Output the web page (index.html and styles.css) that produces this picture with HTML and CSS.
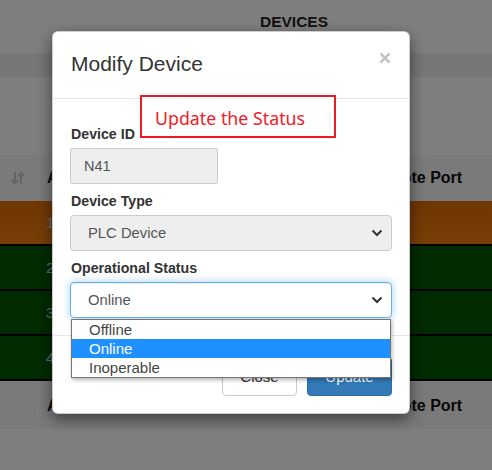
FILE: index.html
```html
<!DOCTYPE html>
<html>
<head>
<meta charset="utf-8">
<link rel="stylesheet" href="styles.css">
</head>
<body>
<div class="page">
  <header class="topbar"><h1 class="page-title">DEVICES</h1></header>
  <div class="subbar"></div>
  <div class="spacer"></div>
  <div class="grid">
    <div class="row head">
      <div class="cell sort">
        <svg width="14" height="14" viewBox="0 0 14 14"><path d="M4 1v11M1 9l3 3 3-3M10 13V2M7 5l3-3 3 3" fill="none" stroke="#c8c8c8" stroke-width="2"/></svg>
      </div>
      <div class="cell">A</div>
      <div class="cell"></div>
      <div class="cell right">Remote Port</div>
    </div>
    <div class="row data orange">
      <div class="cell"></div><div class="cell num">1</div><div class="cell"></div><div class="cell"></div>
    </div>
    <div class="row data green">
      <div class="cell"></div><div class="cell num">2</div><div class="cell"></div><div class="cell"></div>
    </div>
    <div class="row data green">
      <div class="cell"></div><div class="cell num">3</div><div class="cell"></div><div class="cell"></div>
    </div>
    <div class="row data green">
      <div class="cell"></div><div class="cell num">4</div><div class="cell"></div><div class="cell"></div>
    </div>
    <div class="row head foot">
      <div class="cell sort"></div>
      <div class="cell">A</div>
      <div class="cell"></div>
      <div class="cell right">Remote Port</div>
    </div>
  </div>
</div>
<div class="backdrop"></div>
<div class="modal">
  <div class="modal-header">
    <h4 class="modal-title">Modify Device</h4>
    <svg class="close" width="12" height="12" viewBox="0 0 12 12"><path d="M1.5 1.5l9 9M10.5 1.5l-9 9" stroke="#c4c4c4" stroke-width="2.6" fill="none"/></svg>
  </div>
  <div class="modal-body">
    <div class="form-group">
      <label class="label">Device ID</label>
      <div class="input short">N41</div>
    </div>
    <div class="form-group">
      <label class="label">Device Type</label>
      <div class="select disabled"><span>PLC Device</span>
        <svg width="12" height="8" viewBox="0 0 12 8"><path d="M1.5 1.5l4.5 4.5 4.5-4.5" fill="none" stroke="#333" stroke-width="2"/></svg>
      </div>
    </div>
    <div class="form-group">
      <label class="label">Operational Status</label>
      <div class="select focus"><span>Online</span>
        <svg width="12" height="8" viewBox="0 0 12 8"><path d="M1.5 1.5l4.5 4.5 4.5-4.5" fill="none" stroke="#333" stroke-width="2"/></svg>
      </div>
    </div>
  </div>
  <div class="modal-footer">
    <div class="btn btn-default">Close</div>
    <div class="btn btn-primary">Update</div>
  </div>
  <div class="annotation">Update the Status</div>
  <ul class="options">
    <li class="option">Offline</li>
    <li class="option selected">Online</li>
    <li class="option">Inoperable</li>
  </ul>
</div>
</body>
</html>
```
FILE: styles.css
```css
html, body {
  margin: 0;
  padding: 0;
}
body {
  width: 492px;
  height: 470px;
  overflow: hidden;
  position: relative;
  font-family: "Liberation Sans", Arial, sans-serif;
  color: #333;
}
.page {
  display: flex;
  flex-direction: column;
  height: 470px;
  background: #fff;
}
.topbar {
  height: 53px;
  box-sizing: border-box;
  padding: 13px 0 0 96px;
  display: flex;
  justify-content: center;
  align-items: flex-start;
}
.page-title {
  margin: 0;
  font-size: 15.5px;
  line-height: 18px;
  font-weight: 700;
  color: #222;
}
.subbar {
  height: 24px;
  background: #eeeeee;
}
.spacer {
  height: 77px;
}
.grid {
  display: flex;
  flex-direction: column;
}
.row {
  display: grid;
  grid-template-columns: 37px 156px 140px 1fr;
}
.row.head {
  height: 46px;
  background: #f4f4f4;
  border-top: 1px solid #fff;
  font-weight: 700;
  font-size: 16px;
  color: #111;
}
.row.head .cell {
  display: flex;
  align-items: center;
  border-left: 1px solid #ffffff;
  padding-left: 9px;
}
.row.head .cell.sort {
  border-left: none;
  padding-left: 11px;
}
.row.head .cell.right {
  padding-left: 33px;
}
.row.foot {
  height: 47px;
  border-bottom: 2px solid #fff;
}
.row.data {
  height: 43px;
  border-bottom: 2px solid #000;
}
.row.data .cell.num {
  display: flex;
  align-items: center;
  padding-left: 9px;
  color: #c8d8ea;
  font-size: 15px;
}
.orange {
  background: linear-gradient(#e06c08, #f07e0c);
}
.green {
  background: #025602;
}
.backdrop {
  position: absolute;
  inset: 0;
  background: rgba(0, 0, 0, 0.5);
}
.modal {
  position: absolute;
  left: 52px;
  top: 31px;
  width: 358px;
  height: 383px;
  box-sizing: border-box;
  background: #fff;
  border: 1px solid rgba(0, 0, 0, 0.2);
  border-radius: 6px;
  box-shadow: 0 5px 15px rgba(0, 0, 0, 0.5);
  display: flex;
  flex-direction: column;
}
.modal-header {
  height: 67px;
  box-sizing: border-box;
  border-bottom: 1px solid #e5e5e5;
  padding: 19px 18px 0 18px;
  display: flex;
  justify-content: space-between;
  align-items: flex-start;
}
.modal-title {
  margin: 0;
  font-size: 21px;
  line-height: 26px;
  font-weight: 400;
  color: #333;
}
.close {
  margin-top: 1px;
}
.modal-body {
  padding: 25px 17px 17px 17px;
  display: flex;
  flex-direction: column;
  gap: 7px;
}
.label {
  display: block;
  font-size: 14.2px;
  line-height: 20px;
  font-weight: 700;
  color: #333;
  margin: 0 0 4px 1px;
}
.input {
  height: 36px;
  box-sizing: border-box;
  border: 1px solid #ccc;
  border-radius: 2px;
  background: #eeeeee;
  padding-left: 13px;
  display: flex;
  align-items: center;
  font-size: 14.5px;
  color: #555;
}
.input.short {
  width: 148px;
}
.select {
  height: 36px;
  box-sizing: border-box;
  border: 1px solid #ccc;
  border-radius: 4px;
  padding: 0 8px 0 17px;
  display: flex;
  align-items: center;
  justify-content: space-between;
  font-size: 14.8px;
  color: #555;
}
.select.disabled {
  background: #eeeeee;
}
.select.focus {
  background: #fff;
  border-color: #66afe9;
  box-shadow: inset 0 1px 1px rgba(0, 0, 0, 0.075), 0 0 8px rgba(102, 175, 233, 0.6);
}
.modal-footer {
  border-top: 1px solid #e5e5e5;
  padding: 21px 17px 0 17px;
  display: flex;
  justify-content: flex-end;
  gap: 10px;
}
.btn {
  height: 39px;
  box-sizing: border-box;
  border-radius: 4px;
  display: flex;
  align-items: center;
  justify-content: center;
  font-size: 15px;
}
.btn-default {
  width: 75px;
  border: 1px solid #ccc;
  background: #fff;
  color: #333;
}
.btn-primary {
  width: 85px;
  border: 1px solid #2e6da4;
  background: #337ab7;
  color: #fff;
}
.annotation {
  position: absolute;
  left: 87px;
  top: 63px;
  width: 196px;
  height: 43px;
  box-sizing: border-box;
  border: 2px solid #ed1c24;
  padding: 9px 0 0 13px;
  font-family: "Noto Sans", "Open Sans", sans-serif;
  font-size: 17.8px;
  line-height: 24px;
  color: #f02029;
  background: #fff;
}
.options {
  position: absolute;
  left: 18px;
  top: 287px;
  width: 320px;
  margin: 0;
  padding: 0;
  list-style: none;
  box-sizing: border-box;
  border: 1px solid #767676;
  background: #fff;
  box-shadow: 1px 2px 4px rgba(0, 0, 0, 0.3);
}
.option {
  height: 19px;
  line-height: 19px;
  padding-left: 17px;
  font-size: 15px;
  color: #444;
}
.option.selected {
  background: #1e90ff;
  color: #fff;
}
```
